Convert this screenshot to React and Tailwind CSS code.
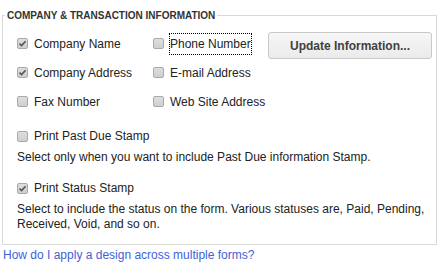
import React from "react";

function Box({ checked }) {
  return (
    <span className="w-[11px] h-[11px] shrink-0 rounded-[2px] border border-[#a9a9a9] bg-gradient-to-b from-[#dedede] to-[#cfcfcf] flex items-center justify-center">
      {checked && (
        <svg width="9" height="9" viewBox="0 0 9 9">
          <path d="M1.5 4.6 L3.6 6.6 L7.6 2.2" fill="none" stroke="#555" strokeWidth="1.6" />
        </svg>
      )}
    </span>
  );
}

function Check({ label, checked, focused, h = "h-[29px]" }) {
  return (
    <div className={`flex items-center ${h}`}>
      <Box checked={checked} />
      <span
        className={`ml-[5px] border py-[3px] leading-[14px] whitespace-nowrap ${
          focused ? "border-dotted border-black" : "border-transparent"
        }`}
      >
        {label}
      </span>
    </div>
  );
}

export default function App() {
  return (
    <div className="w-[441px] h-[263px] bg-white text-[12px] text-[#222] font-['Liberation_Sans',Arial,sans-serif]">
      <fieldset className="mx-[2px] w-[435px] mt-[9px] border border-[#d9d9d9] pl-[14px] pr-[2px] pb-[12px]">
        <legend className="-ml-[12px] px-[2px] text-[10px] leading-[13px] font-bold text-[#333]">
          COMPANY &amp; TRANSACTION INFORMATION
        </legend>
        <div className="flex pt-[7px]">
          <div className="w-[136px] flex flex-col">
            <Check label="Company Name" checked />
            <Check label="Company Address" checked />
            <Check label="Fax Number" />
          </div>
          <div className="w-[115px] flex flex-col">
            <Check label="Phone Number" focused />
            <Check label="E-mail Address" />
            <Check label="Web Site Address" />
          </div>
          <div>
            <button className="mt-[3px] w-[164px] h-[27px] rounded-[3px] border border-[#c9c9c9] bg-gradient-to-b from-[#f6f6f6] to-[#ebebeb] font-bold text-[#414141]">
              Update Information...
            </button>
          </div>
        </div>
        <div className="mt-[8px]">
          <Check label="Print Past Due Stamp" h="h-[24px]" />
        </div>
        <p className="mt-[2px] leading-[15px]">
          Select only when you want to include Past Due information Stamp.
        </p>
        <div className="mt-[11px]">
          <Check label="Print Status Stamp" checked h="h-[24px]" />
        </div>
        <p className="mt-[2px] leading-[15px]">
          Select to include the status on the form. Various statuses are, Paid, Pending, Received, Void, and so on.
        </p>
      </fieldset>
      <a href="#" className="block mt-[3px] ml-[3px] leading-[15px] text-[#3d62d8]">
        How do I apply a design across multiple forms?
      </a>
    </div>
  );
}
